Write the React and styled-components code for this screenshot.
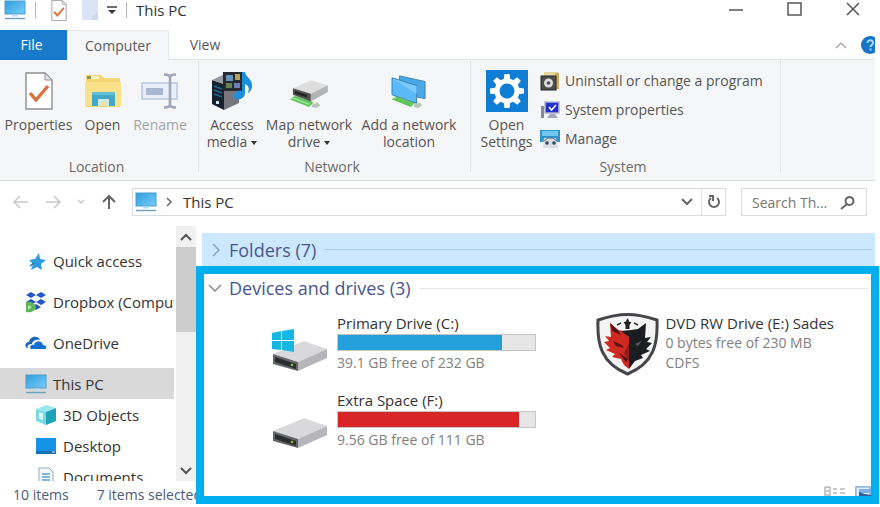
import React, { useState } from "react";
import styled, { createGlobalStyle } from "styled-components";

const GlobalStyle = createGlobalStyle`
  * {
    box-sizing: border-box;
  }
  body {
    margin: 0;
    background: #fff;
    font-family: "Open Sans", "Noto Sans", sans-serif;
    font-size: 14px;
    color: #333;
  }
  button, input {
    font: inherit;
    color: inherit;
    border: 0;
    padding: 0;
    background: none;
  }
  svg {
    display: block;
    flex: none;
  }
`;

const Window = styled.div`
  height: 100vh;
  display: flex;
  flex-direction: column;
  overflow: hidden;
`;

/* ---------- title bar ---------- */

const TitleBar = styled.header`
  height: 30px;
  display: flex;
  align-items: flex-start;
  padding: 0 20px 0 4px;
`;

const QuickTools = styled.div`
  height: 20px;
  display: flex;
  align-items: center;
  gap: 9px;
`;

const Divider = styled.span`
  width: 1px;
  height: 16px;
  background: #b5b5b5;
`;

const Title = styled.h1`
  margin: 0;
  font-size: 15px;
  line-height: 20px;
  font-weight: 400;
`;

const WindowControls = styled.div`
  height: 18px;
  display: flex;
  align-items: center;
  gap: 44px;
  margin-left: auto;
`;

const PlainButton = styled.button`
  display: flex;
  align-items: center;
  justify-content: center;
`;

/* ---------- ribbon ---------- */

const Tabs = styled.nav`
  height: 30px;
  flex: none;
  display: flex;
  margin-right: 5px;
  border-bottom: 1px solid #e3e4e5;
`;

const Tab = styled.button`
  width: ${(p) => p.$width}px;
  height: 30px;
  line-height: ${(p) => (p.$active ? 28 : 30)}px;
  color: ${(p) => (p.$file ? "#fff" : "#5a5a5a")};
  background: ${(p) => (p.$file ? "#1979ca" : p.$active ? "#f5f6f7" : "transparent")};
  border: ${(p) => (p.$active ? "1px solid #e6e7e8" : "0")};
  border-bottom: 0;
  padding-right: ${(p) => (p.$file ? "4px" : "0")};
`;

const TabTools = styled.div`
  display: flex;
  align-items: center;
  gap: 14px;
  margin-left: auto;
  overflow: hidden;
`;

const HelpClip = styled.div`
  width: 14px;
  overflow: hidden;
`;

const Ribbon = styled.section`
  height: 121px;
  flex: none;
  display: flex;
  margin-right: 5px;
  background: #f5f6f7;
  border-bottom: 1px solid #dcdddf;
`;

const Group = styled.div`
  width: ${(p) => p.$width}px;
  display: flex;
  flex-direction: column;
  padding: 6px ${(p) => p.$pad}px 4px;
  background: linear-gradient(#e2e3e5, #e2e3e5) no-repeat right top / 1px 112px;
`;

const GroupItems = styled.div`
  flex: 1;
  display: flex;
`;

const GroupLabel = styled.div`
  line-height: 18px;
  padding-right: 6px;
  text-align: center;
  color: #6a6a6a;
`;

const BigButton = styled.button`
  width: ${(p) => p.$width}px;
  display: flex;
  flex-direction: column;
  align-items: center;
  justify-content: flex-start;
  padding-top: 4px;
  line-height: 17px;
  white-space: nowrap;
  color: ${(p) => (p.disabled ? "#a3a3a8" : "#555")};
`;

const IconBox = styled.span`
  height: 42px;
  margin-bottom: 4px;
  display: flex;
  align-items: center;
`;

const Caret = styled.span`
  display: inline-block;
  margin-left: 4px;
  vertical-align: middle;
  border: 3px solid transparent;
  border-top: 4px solid #333;
  border-bottom: 0;
`;

const SmallButtons = styled.div`
  display: flex;
  flex-direction: column;
`;

const SmallButton = styled.button`
  height: 29px;
  display: flex;
  align-items: center;
  gap: 5px;
  white-space: nowrap;
  color: #555;
`;

/* ---------- address row ---------- */

const AddressRow = styled.div`
  height: 42px;
  flex: none;
  display: flex;
  align-items: center;
  gap: 15px;
  padding: 0 13px 0 12px;
`;

const NavButtons = styled.div`
  width: 110px;
  padding-right: 5px;
  margin-right: -5px;
  display: flex;
  align-items: center;
  justify-content: space-between;
`;

const AddressBox = styled.div`
  flex: 1;
  height: 28px;
  display: flex;
  align-items: center;
  gap: 8px;
  padding-left: 2px;
  border: 1px solid #dcdcdc;
  line-height: 26px;
  font-size: 15px;
`;

const Refresh = styled(PlainButton)`
  width: 24px;
  height: 26px;
  border-left: 1px solid #e2e2e2;
`;

const Crumb = styled.a`
  flex: 1;
  padding-left: 2px;
  color: #333;
  text-decoration: none;
`;

const SearchBox = styled.label`
  width: 126px;
  height: 28px;
  display: flex;
  align-items: center;
  padding: 0 10px;
  border: 1px solid #dcdcdc;
`;

const SearchInput = styled.input`
  flex: 1;
  min-width: 0;
  outline: 0;
  &::placeholder {
    color: #777;
    opacity: 1;
  }
`;

/* ---------- body ---------- */

const Body = styled.div`
  flex: 1;
  min-height: 0;
  display: grid;
  grid-template-columns: 196px 1fr;
  padding: 3px 1px 3px 0;
`;

const Side = styled.aside`
  min-height: 0;
  display: flex;
  flex-direction: column;
  padding-bottom: 4px;
`;

const TreeArea = styled.div`
  flex: 1;
  min-height: 0;
  display: flex;
  justify-content: space-between;
`;

const Tree = styled.nav`
  width: 174px;
  padding-top: 19px;
  overflow: hidden;
`;

const TreeItem = styled.a`
  height: 31px;
  display: flex;
  align-items: center;
  gap: 6px;
  padding-left: ${(p) => (p.$child ? 35 : 25)}px;
  margin-bottom: ${(p) => (p.$spaced ? 10 : 0)}px;
  background: ${(p) => (p.$selected ? "#d9d9d9" : "transparent")};
  color: #333;
  font-size: 15px;
  text-decoration: none;
  white-space: nowrap;
`;

const ScrollBar = styled.div`
  width: 20px;
  display: flex;
  flex-direction: column;
  background: #f0f0f0;
`;

const ScrollButton = styled(PlainButton)`
  height: 21px;
`;

const Thumb = styled.div`
  height: 85px;
  margin-bottom: auto;
  background: #cdcdcd;
`;

const StatusBar = styled.footer`
  height: 19px;
  display: flex;
  gap: 28px;
  padding-left: 13px;
  overflow: hidden;
  line-height: 28px;
  white-space: nowrap;
  color: #4c5a7c;
`;

const Content = styled.main`
  display: flex;
  flex-direction: column;
  padding-top: 7px;
`;

const GroupHeader = styled.h2`
  height: ${(p) => (p.$highlight ? 33 : 28)}px;
  flex: none;
  display: flex;
  align-items: center;
  gap: 7px;
  margin: ${(p) => (p.$highlight ? "0 4px 0 6px" : "0")};
  padding: 0 3px 0 ${(p) => (p.$highlight ? 8 : 4)}px;
  background: ${(p) => (p.$highlight ? "#cce8ff" : "transparent")};
  color: #4a5590;
  font-size: 18px;
  font-weight: 400;

  &::after {
    content: "";
    flex: 1;
    height: 1px;
    margin-left: 2px;
    background: ${(p) => (p.$highlight ? "#a9cde8" : "#e3e6ec")};
  }
`;

const Outlined = styled.section`
  flex: 1;
  min-height: 0;
  display: flex;
  flex-direction: column;
  border: 8px solid #03aeef;
`;

const Drives = styled.div`
  display: grid;
  grid-template-columns: 13fr 11fr;
  row-gap: 14px;
  padding: 11px 0 0 68px;
`;

const Drive = styled.article`
  display: flex;
  align-items: flex-start;
  gap: ${(p) => (p.$wide ? 6 : 9)}px;
  line-height: 20px;
  white-space: nowrap;
`;

const DriveName = styled.div`
  color: #333;
  font-size: 15px;
`;

const DriveInfo = styled.div`
  color: #808080;
`;

const Meter = styled.div`
  width: 199px;
  height: 17px;
  margin: 1px 0 2px;
  background: #e6e6e6;
  border: 1px solid #c4c4c4;
`;

const MeterFill = styled.div`
  height: 15px;
  background: ${(p) => p.$color};
`;

const ViewModes = styled.div`
  height: 10px;
  display: flex;
  justify-content: flex-end;
  align-items: flex-start;
  gap: 9px;
  margin-top: auto;
  overflow: hidden;
`;

/* ---------- icons ---------- */

const Monitor = () => (
  <svg width="22" height="20" viewBox="0 0 22 20">
    <defs>
      <linearGradient id="screen" x1="0" y1="0" x2="1" y2="1">
        <stop offset="0" stopColor="#2f9ddf" />
        <stop offset="1" stopColor="#7accfa" />
      </linearGradient>
    </defs>
    <rect x="1" y="1" width="20" height="13" fill="url(#screen)" stroke="#4a9dcc" />
    <path d="M8 14.5h6v2H8z" fill="#b8dff2" />
    <path d="M1 18.5h20" stroke="#6aa3c0" strokeWidth="1.4" />
  </svg>
);

const CheckedPage = ({ width, height }) => (
  <svg width={width} height={height} viewBox="0 0 28 38">
    <path d="M1 1h19l7 7v29H1z" fill="#fff" stroke="#8f8f96" strokeWidth="1.4" />
    <path d="M20 1v7h7z" fill="#e4e4e8" stroke="#8f8f96" />
    <path d="M5 21l6 7 12-14" fill="none" stroke="#d9713c" strokeWidth="3.4" />
  </svg>
);

const BlankPage = () => (
  <svg width="16" height="20" viewBox="0 0 16 20">
    <path d="M0 0h16v20H0z" fill="#dbe4f7" />
    <path d="M10 20V16l6-4v8z" fill="#cdd8f0" />
  </svg>
);

const CustomizeArrow = () => (
  <svg width="10" height="9" viewBox="0 0 10 9">
    <path d="M0 1h10" stroke="#333" strokeWidth="1.4" />
    <path d="M1 4h8l-4 4z" fill="#333" />
  </svg>
);

const OpenFolder = () => (
  <svg width="38" height="34" viewBox="0 0 38 34">
    <path d="M2 1h15l3 3h16v29H2z" fill="#f6d775" />
    <path d="M1 8h36v24H1z" fill="#fbe08a" />
    <path d="M3 2h12v3H3z" fill="#fff3c0" />
    <path d="M3 2h4v3H3z" fill="#8a9a50" />
    <path d="M8 18h23v14h-6v-7H14v7H8z" fill="#43a9c5" />
    <path d="M8 18h23v3H8z" fill="#62bfd6" />
    <path d="M14 25h11v7h-3v-4h-5v4h-3z" fill="#c9e9ec" />
  </svg>
);

const RenameIcon = () => (
  <svg width="38" height="36" viewBox="0 0 38 36">
    <rect x="1" y="10" width="35" height="16" fill="#e9effa" stroke="#b4c3df" strokeWidth="1.4" />
    <rect x="5" y="15" width="17" height="7" fill="#a9b7d3" />
    <path d="M29 4v28M23 1.5c4 0 6 1 6 3 0-2 2-3 6-3M23 34.5c4 0 6-1 6-3 0 2 2 3 6 3" fill="none" stroke="#a0a8b7" strokeWidth="2.6" />
  </svg>
);

const MediaIcon = () => (
  <svg width="42" height="40" viewBox="0 0 42 40">
    <path d="M1 9l12 4v26L1 33z" fill="#16222d" />
    <path d="M13 13l15-3v22l-15 7z" fill="#77767d" />
    <path d="M1 9l13-6 14 6-15 4z" fill="#989aa0" />
    <path d="M3 15l8 3M3 19l8 3M3 23l8 3" stroke="#1f678e" strokeWidth="1.5" />
    <path d="M5 30h3v3H5z" fill="#d3e6f3" />
    <rect x="12" y="1" width="19" height="19" fill="#292a31" />
    <path d="M15 4h7v6h-7z" fill="#6a91b6" />
    <path d="M24 3h5v6h-5z" fill="#b9a15c" />
    <path d="M15 12h6v5h-6z" fill="#62864d" />
    <path d="M23 12h6v5h-6z" fill="#6a80b5" />
    <path d="M31 1h3c1 6 8 7 7 15-1 4-3 6-4 6 2-5 0-8-3-9v9c0 7-11 9-11 3 0-4 4-6 8-5z" fill="#1a8fdd" />
  </svg>
);

const Cable = () => (
  <>
    <path d="M1 27l5-4 20 7-5 5z" fill="#5fc65c" />
    <path d="M3 25l18 7" stroke="#a1e79a" strokeWidth="1.6" />
    <path d="M25 31l5-1 3 3-4 3-5-1z" fill="#b7c5b8" />
    <circle cx="27" cy="30" r="1.8" fill="#e9efea" />
  </>
);

const NetworkDrive = () => (
  <svg width="42" height="34" viewBox="0 0 42 36">
    <Cable />
    <path d="M4 15L23 7l18 5-18 9z" fill="#dedede" />
    <path d="M4 15l19 6v8L4 22z" fill="#53504f" />
    <path d="M6 18l13 4v3L6 21z" fill="#252222" />
    <path d="M23 21l18-9v7l-18 10z" fill="#b4b4b6" />
  </svg>
);

const NetworkLocation = () => (
  <svg width="38" height="34" viewBox="0 0 38 36">
    <path d="M9 2l27 6v18L9 21z" fill="#4aa8e6" stroke="#3d7fae" />
    <Cable />
    <path d="M1 4l26 8v19L1 22z" fill="#5bbaf5" stroke="#3a83b8" />
    <path d="M2 5l25 8v8z" fill="#7bcbfa" />
    <path d="M4 27l3-3 16 6-4 4z" fill="#5fc65c" />
  </svg>
);

const gearTeeth = [0, 45, 90, 135, 180, 225, 270, 315];

const SettingsTile = () => (
  <svg width="42" height="42" viewBox="0 0 42 42">
    <path d="M0 0h42v42H0z" fill="#0f7dd3" />
    {gearTeeth.map((angle) => (
      <path key={angle} d="M17.5 11l1-7h5l1 7z" fill="#fff" transform={`rotate(${angle} 21 21)`} />
    ))}
    <circle cx="21" cy="21" r="10" fill="none" stroke="#fff" strokeWidth="5" />
  </svg>
);

const UninstallIcon = () => (
  <svg width="20" height="20" viewBox="0 0 20 20">
    <path d="M4 1h14v15H4z" fill="#e5d49c" />
    <path d="M15 2h4v16h-4z" fill="#d5a955" />
    <rect x="1" y="5" width="15" height="14" fill="#4d4f4d" stroke="#252525" />
    <circle cx="8.5" cy="12" r="4.5" fill="#ddd" />
    <circle cx="8.5" cy="12" r="1.8" fill="#4c4c4c" />
  </svg>
);

const SystemIcon = () => (
  <svg width="20" height="18" viewBox="0 0 20 18">
    <path d="M1 5h3v12H1z" fill="#85899c" />
    <rect x="5" y="1" width="14" height="11" fill="#2330c5" stroke="#b6b5d1" strokeWidth="1.5" />
    <path d="M9 6l2.5 3L16 4" fill="none" stroke="#fff" strokeWidth="1.5" />
    <path d="M10 13h5l3 4H7z" fill="#a7a7bb" />
  </svg>
);

const ManageIcon = () => (
  <svg width="20" height="20" viewBox="0 0 20 20">
    <path d="M0 1h20v12H0z" fill="#2c95cf" />
    <path d="M2 2h16v5H2z" fill="#72c5ec" />
    <path d="M4 9h12l2 10H3z" fill="#d8dde3" />
    <path d="M4 12l4-3h5l4 3" fill="none" stroke="#5b6b7b" />
    <circle cx="7" cy="14" r="1.8" fill="#34495e" />
    <circle cx="14" cy="14" r="1.8" fill="#34495e" />
  </svg>
);

const LineIcon = ({ d, width = 14, height = 14, color = "#555", stroke = 1.5 }) => (
  <svg width={width} height={height} viewBox={`0 0 ${width} ${height}`} fill="none" stroke={color} strokeWidth={stroke}>
    <path d={d} />
  </svg>
);

const StarIcon = () => (
  <svg width="22" height="20" viewBox="0 0 22 20">
    <path d="M14 2l1 6 6 1-5 4 1 6-5-3-6 3 2-6-4-4 6-1z" fill="#2f9ddd" />
    <path d="M5 15l4-3" stroke="#1d72ad" strokeWidth="1.5" />
  </svg>
);

const DropboxIcon = () => (
  <svg width="22" height="22" viewBox="0 0 22 22">
    <path d="M6 1l5 3-5 3-5-3zM16 1l5 3-5 3-5-3zM6 8l5 3-5 3-5-3zM16 8l5 3-5 3-5-3zM11 13l5 3-5 3-4-3z" fill="#2457c8" />
    <path d="M1 11c4-1 9 1 10 5-1 4-5 6-10 5z" fill="#5cb656" />
    <path d="M3 14l4 2-4 3z" fill="#b9e6b0" />
  </svg>
);

const OneDriveIcon = () => (
  <svg width="22" height="16" viewBox="0 0 22 16">
    <path d="M3 13c-4-1-3-6 1-6 1-6 9-7 11-2-5-1-8 2-8 4-4 0-5 2-4 4z" fill="#1667b8" />
    <path d="M6 14c-2-2 0-5 3-4 1-5 8-5 9 0 4 0 4 4 2 4z" fill="#0f6fd0" />
  </svg>
);

const CubeIcon = () => (
  <svg width="22" height="22" viewBox="0 0 22 22">
    <path d="M1 5l10-4 10 3-10 4z" fill="#9ce6ee" />
    <path d="M1 5l10 3v13L1 17z" fill="#78d9e2" />
    <path d="M11 8l10-4v13l-10 4z" fill="#1ba3b8" />
    <path d="M4 8l4 1v7l-4-1z" fill="#d9fafa" />
  </svg>
);

const DesktopIcon = () => (
  <svg width="22" height="18" viewBox="0 0 22 18">
    <path d="M1 1h20v16H1z" fill="#1593e8" />
    <path d="M1 14h20v3H1z" fill="#1a6fae" />
    <path d="M17 15h3" stroke="#d7eefd" />
  </svg>
);

const DocumentIcon = () => (
  <svg width="22" height="20" viewBox="0 0 22 20">
    <path d="M4 1h10l4 4v14H4z" fill="#f3f8fc" stroke="#91a9bd" />
    <path d="M7 7h8M7 10h8M7 13h8M7 16h5" stroke="#5fa1d3" strokeWidth="1.5" />
  </svg>
);

const DriveIcon = ({ windows }) => (
  <svg width="56" height="60" viewBox="0 0 56 60">
    <path d="M1 41l31-13 23 8-29 13z" fill="#d9d9db" />
    <path d="M1 41l25 8v9L1 51z" fill="#65656a" />
    <path d="M3 44l21 7v5L3 49z" fill="#2b2e2d" />
    <path d="M26 49l29-13v9L26 58z" fill="#b6b6ba" />
    <circle cx="20" cy="52" r="1.3" fill="#7fc34a" />
    {windows && (
      <path d="M0 20l9-2v9H0zM10 18l12-2v11H10zM0 28h9v9l-9-1zM10 28h12v11l-12-2z" fill="#16b7e2" />
    )}
  </svg>
);

const WolfShield = () => (
  <svg width="63" height="63" viewBox="0 0 63 63">
    <path d="M31.5 1.500C41 1.500 52 4 61 7c1 24-3 43-29.500 54C5 50 1 31 2 7 11 4 22 1.500 31.500 1.500z" fill="#f4f4f4" stroke="#46464a" strokeWidth="3" />
    <path d="M14 10l8 7 5 1 6 6v32l-5-4-3-6-9-2 3-3-9-4 4-2-6-6 5-1-4-5 6 1z" fill="#cf2a22" />
    <path d="M50 10l-8 6-7 1-10 1 8 6v32l6-8 8-3-2-3 9-4-4-2 6-6-5-1 4-5-6 1z" fill="#1c1d20" />
    <path d="M31.5 5l2 4h2l-2 3v4h-4v-4l-2-3h2z" fill="#222" />
    <path d="M21 12l4-2M42 12l-4-2" stroke="#333" strokeWidth="1.500" />
    <path d="M17 28l9 4 2 3-8-2zM14 10l8 7 3 5-9-4z" fill="#5c1212" />
    <path d="M23 40l9 6-2 3z" fill="#4b1010" />
    <path d="M33 30l-5 10 5 8z" fill="#8f1d1a" />
    <path d="M39 31l7-3-4 5z" fill="#55555b" />
  </svg>
);

const DetailsView = () => (
  <svg width="22" height="14" viewBox="0 0 22 14">
    <path d="M1 1h5v12H1zM9 3h4M16 3h5M9 7h4M16 7h5M9 11h4M16 11h5M2 5h3M2 9h3" fill="none" stroke="#929292" />
  </svg>
);

const TilesView = () => (
  <svg width="16" height="14" viewBox="0 0 16 14">
    <path d="M0 0h16v14H0z" fill="#b4d5f4" />
    <path d="M1 1h14v12H1z" fill="#e4effa" stroke="#72a1d4" />
    <path d="M4 3h12v4H4z" fill="#7fb2ec" />
    <path d="M4 6l6 2 6 1v5H4z" fill="#315f9c" />
  </svg>
);

const HelpIcon = () => (
  <svg width="18" height="18" viewBox="0 0 18 18">
    <circle cx="9" cy="9" r="9" fill="#1475c8" />
    <path d="M6.5 7c0-4 6-3.5 5.5 0-.3 2-2.5 2-2.5 4M9.5 12.500v2" fill="none" stroke="#a8d7ff" strokeWidth="2" />
  </svg>
);

/* ---------- data ---------- */

const tree = [
  { name: "Quick access", icon: <StarIcon />, spaced: true },
  { name: "Dropbox (Computer)", icon: <DropboxIcon />, spaced: true },
  { name: "OneDrive", icon: <OneDriveIcon />, spaced: true },
  { name: "This PC", icon: <Monitor /> },
  { name: "3D Objects", icon: <CubeIcon />, child: true },
  { name: "Desktop", icon: <DesktopIcon />, child: true },
  { name: "Documents", icon: <DocumentIcon />, child: true },
];

const drives = [
  { name: "Primary Drive (C:)", used: 83, color: "#259fdc", info: ["39.1 GB free of 232 GB"], icon: <DriveIcon windows /> },
  { name: "DVD RW Drive (E:) Sades", info: ["0 bytes free of 230 MB", "CDFS"], icon: <WolfShield />, wide: true },
  { name: "Extra Space (F:)", used: 92, color: "#d92525", info: ["9.56 GB free of 111 GB"], icon: <DriveIcon /> },
];

export default function App() {
  const [tab, setTab] = useState("Computer");
  const [selected, setSelected] = useState("This PC");
  const [query, setQuery] = useState("");

  return (
    <>
      <GlobalStyle />
      <Window>
        <TitleBar>
          <QuickTools>
            <Monitor />
            <Divider />
            <PlainButton aria-label="Properties">
              <CheckedPage width={28} height={21} />
            </PlainButton>
            <PlainButton aria-label="New folder">
              <BlankPage />
            </PlainButton>
            <PlainButton aria-label="Customize toolbar">
              <CustomizeArrow />
            </PlainButton>
            <Divider />
            <Title>This PC</Title>
          </QuickTools>
          <WindowControls>
            <PlainButton aria-label="Minimize">
              <LineIcon d="M0 8h14" />
            </PlainButton>
            <PlainButton aria-label="Maximize">
              <LineIcon width={15} d="M1 1h13v12H1z" />
            </PlainButton>
            <PlainButton aria-label="Close">
              <LineIcon d="M1 1l12 12M13 1L1 13" />
            </PlainButton>
          </WindowControls>
        </TitleBar>

        <Tabs>
          <Tab $width={67} $file>File</Tab>
          <Tab $width={102} $active={tab === "Computer"} onClick={() => setTab("Computer")}>Computer</Tab>
          <Tab $width={72} $active={tab === "View"} onClick={() => setTab("View")}>View</Tab>
          <TabTools>
            <PlainButton aria-label="Collapse ribbon">
              <LineIcon width={12} height={8} color="#aaa" d="M1 7l5-5 5 5" />
            </PlainButton>
            <HelpClip>
              <PlainButton aria-label="Help">
                <HelpIcon />
              </PlainButton>
            </HelpClip>
          </TabTools>
        </Tabs>

        <Ribbon>
          <Group $width={199} $pad={0}>
            <GroupItems>
              <BigButton $width={77}>
                <IconBox><CheckedPage width={28} height={38} /></IconBox>
                Properties
              </BigButton>
              <BigButton $width={51}>
                <IconBox><OpenFolder /></IconBox>
                Open
              </BigButton>
              <BigButton $width={64} disabled>
                <IconBox><RenameIcon /></IconBox>
                Rename
              </BigButton>
            </GroupItems>
            <GroupLabel>Location</GroupLabel>
          </Group>
          <Group $width={272} $pad={2}>
            <GroupItems>
              <BigButton $width={62}>
                <IconBox><MediaIcon /></IconBox>
                <span>Access</span>
                <span>media<Caret /></span>
              </BigButton>
              <BigButton $width={92}>
                <IconBox><NetworkDrive /></IconBox>
                <span>Map network</span>
                <span>drive<Caret /></span>
              </BigButton>
              <BigButton $width={108}>
                <IconBox><NetworkLocation /></IconBox>
                <span>Add a network</span>
                <span>location</span>
              </BigButton>
            </GroupItems>
            <GroupLabel>Network</GroupLabel>
          </Group>
          <Group $width={310} $pad={2}>
            <GroupItems>
              <BigButton $width={67}>
                <IconBox><SettingsTile /></IconBox>
                <span>Open</span>
                <span>Settings</span>
              </BigButton>
              <SmallButtons>
                <SmallButton><UninstallIcon />Uninstall or change a program</SmallButton>
                <SmallButton><SystemIcon />System properties</SmallButton>
                <SmallButton><ManageIcon />Manage</SmallButton>
              </SmallButtons>
            </GroupItems>
            <GroupLabel>System</GroupLabel>
          </Group>
        </Ribbon>

        <AddressRow>
          <NavButtons>
            <PlainButton aria-label="Back">
              <LineIcon width={17} color="#c8c8c8" d="M16 7H2M8 1L2 7l6 6" />
            </PlainButton>
            <PlainButton aria-label="Forward">
              <LineIcon width={17} color="#c8c8c8" d="M1 7h14M9 1l6 6-6 6" />
            </PlainButton>
            <PlainButton aria-label="Recent locations">
              <LineIcon width={8} height={6} color="#c8c8c8" d="M1 1l3 3 3-3" />
            </PlainButton>
            <PlainButton aria-label="Up">
              <LineIcon width={16} height={16} color="#666" stroke={2} d="M8 15V2M2 8l6-6 6 6" />
            </PlainButton>
          </NavButtons>
          <AddressBox>
            <Monitor />
            <LineIcon width={8} height={10} color="#666" d="M2 1l4 4-4 4" />
            <Crumb href="#this-pc">This PC</Crumb>
            <PlainButton aria-label="Previous locations">
              <LineIcon width={12} height={8} color="#666" stroke={2} d="M1 1l5 5 5-5" />
            </PlainButton>
            <Refresh aria-label="Refresh">
              <LineIcon width={14} height={16} color="#666" stroke={2} d="M10 4a5 5 0 1 1-6 0M2 2h4v5" />
            </Refresh>
          </AddressBox>
          <SearchBox>
            <SearchInput
              aria-label="Search This PC"
              placeholder="Search Th..."
              value={query}
              onChange={(e) => setQuery(e.target.value)}
            />
            <LineIcon width={16} height={16} color="#666" stroke={2} d="M6 9a4 4 0 1 1 3 2 4 4 0 0 1-3-2zM7 10l-6 5" />
          </SearchBox>
        </AddressRow>

        <Body>
          <Side>
            <TreeArea>
              <Tree>
                {tree.map((item) => (
                  <TreeItem
                    key={item.name}
                    href="#tree"
                    $child={item.child}
                    $spaced={item.spaced}
                    $selected={selected === item.name}
                    onClick={() => setSelected(item.name)}
                  >
                    {item.icon}
                    {item.name}
                  </TreeItem>
                ))}
              </Tree>
              <ScrollBar>
                <ScrollButton aria-label="Scroll up">
                  <LineIcon width={12} height={8} color="#555" stroke={2} d="M1 7l5-5 5 5" />
                </ScrollButton>
                <Thumb />
                <ScrollButton aria-label="Scroll down">
                  <LineIcon width={12} height={8} color="#555" stroke={2} d="M1 1l5 5 5-5" />
                </ScrollButton>
              </ScrollBar>
            </TreeArea>
            <StatusBar>
              <span>10 items</span>
              <span>7 items selected</span>
            </StatusBar>
          </Side>

          <Content>
            <GroupHeader $highlight>
              <LineIcon width={12} color="#8ba3bd" d="M3 1l6 6-6 6" />
              Folders (7)
            </GroupHeader>
            <Outlined>
              <GroupHeader>
                <LineIcon width={14} height={10} color="#888" d="M1 2l6 6 6-6" />
                Devices and drives (3)
              </GroupHeader>
              <Drives>
                {drives.map((drive) => (
                  <Drive key={drive.name} $wide={drive.wide}>
                    {drive.icon}
                    <div>
                      <DriveName>{drive.name}</DriveName>
                      {drive.used && (
                        <Meter role="progressbar" aria-label={drive.name} aria-valuenow={drive.used}>
                          <MeterFill $color={drive.color} style={{ width: `${drive.used}%` }} />
                        </Meter>
                      )}
                      {drive.info.map((line) => (
                        <DriveInfo key={line}>{line}</DriveInfo>
                      ))}
                    </div>
                  </Drive>
                ))}
              </Drives>
              <ViewModes>
                <PlainButton aria-label="Details view">
                  <DetailsView />
                </PlainButton>
                <PlainButton aria-label="Tiles view">
                  <TilesView />
                </PlainButton>
              </ViewModes>
            </Outlined>
          </Content>
        </Body>
      </Window>
    </>
  );
}
